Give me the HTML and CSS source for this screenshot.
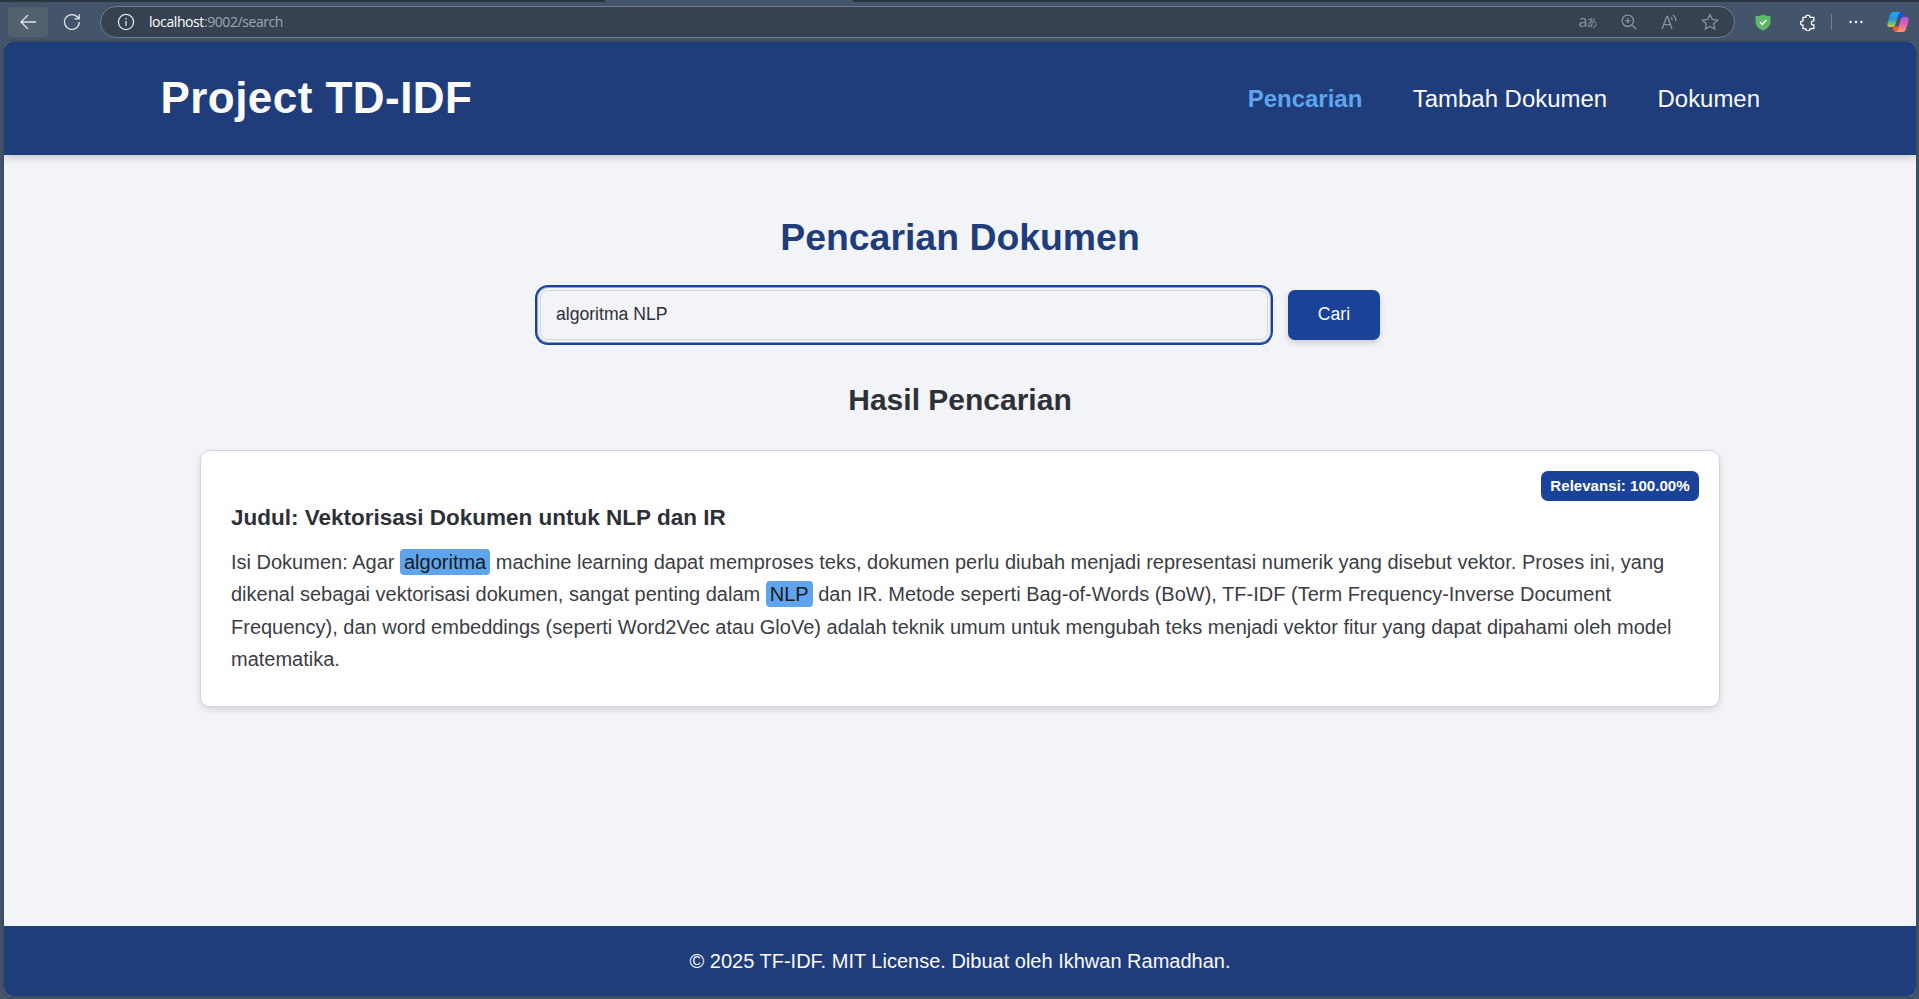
FILE: index.html
```
<!DOCTYPE html>
<html lang="id">
<head>
<meta charset="utf-8">
<title>Pencarian Dokumen</title>
<link rel="stylesheet" href="styles.css">
</head>
<body>
<div class="toolbar">
  <button class="back" aria-label="Back"><svg width="18" height="18" viewBox="0 0 18 18"><path d="M17 9H2M9 2L2 9l7 7"/></svg></button>
  <svg class="reload" width="18" height="18" viewBox="0 0 18 18"><path d="M16.300 9A7.400 7.400 0 1 1 14.800 4.500L16 5.800M16.200 1.200v4.700h-4.800"/></svg>
  <div class="address">
    <svg class="info" width="18" height="18" viewBox="0 0 18 18"><circle cx="9" cy="9" r="7.600"/><path d="M9 8v5M9 5v1.500"/></svg>
    <span class="url"><span class="host">localhost</span>:9002/search</span>
    <div class="tools">
      <span class="translate"><span class="latin">a</span><span class="kana">あ</span></span>
      <svg width="16" height="16" viewBox="0 0 16 16"><circle cx="6.800" cy="6.800" r="5.700"/><path d="M11 11l4.200 4.200M6.800 4v5.600M4 6.800h5.600"/></svg>
      <svg width="17" height="16" viewBox="0 0 17 16"><path d="M1 15L5.800 2.500h.8L11 15M2.600 10.600h6.900M9.800 3.200c1 .8 1.400 1.800 1.500 3M12 1c1.900 1.400 2.900 3.600 2.900 6"/></svg>
      <svg width="18" height="18" viewBox="0 0 18 18"><path d="M9 1.500l2.300 4.900 5.300.7-3.900 3.700 1 5.300L9 13.500l-4.700 2.600 1-5.300L1.400 7.100l5.300-.7z"/></svg>
    </div>
  </div>
  <div class="extensions">
    <svg class="shield" width="16" height="17" viewBox="0 0 16 17"><path fill="#5db867" d="M8 .5c2.200 1.200 4.600 1.600 7.500 1.600v5.400c0 4-2.800 7.200-7.500 9-4.700-1.800-7.500-5-7.500-9V2.100C3.400 2.100 5.800 1.700 8 .5z"/><path fill="none" stroke="#fff" stroke-width="1.500" d="M5 8l2.400 2.400L11.300 6"/></svg>
    <svg class="puzzle" width="16" height="17" viewBox="0 0 16 17"><path d="M3 3.300h2.700a2.200 2.200 0 0 1 4.400 0h3.700v3.600h-.4a2 2 0 0 0 0 4h.4v3.800h-3.700a2.200 2.200 0 0 1-4.400 0H3v-3.500h-.3a2.200 2.200 0 0 1 0-4.400H3z"/></svg>
    <span class="divider"></span>
    <svg class="more" width="14" height="4" viewBox="0 0 14 4"><circle cx="1.600" cy="2" r="1.200"/><circle cx="7" cy="2" r="1.200"/><circle cx="12.400" cy="2" r="1.200"/></svg>
    <svg class="copilot" width="22" height="20" viewBox="0 0 22 20">
      <defs>
        <linearGradient id="cool" x1="0" y1="0" x2="0" y2="1"><stop offset="0" stop-color="#1cacf5"/><stop offset=".45" stop-color="#2592e0"/><stop offset=".72" stop-color="#52b98a"/><stop offset="1" stop-color="#e8cf28"/></linearGradient>
        <linearGradient id="warm" x1="0" y1="0" x2="0" y2="1"><stop offset="0" stop-color="#a45af0"/><stop offset=".5" stop-color="#e85fae"/><stop offset="1" stop-color="#ff9a62"/></linearGradient>
      </defs>
      <path fill="#1c51d4" d="M10 0h3.500c1.500 0 2.200.8 2.700 2.500l.9 2.700h-5.600z"/>
      <path fill="#f05a32" d="M5.500 14.500h6L10 20H9c-1.800 0-2.600-1-3-2.500z"/>
      <path fill="url(#cool)" d="M6.500 0H14c-1.600.4-2.200 1.500-2.700 3.200L8.500 12.300C8 14.100 6.800 15 5 15H2.700C.6 15 0 13.500.5 11.500L3 3C3.600 1 4.600 0 6.500 0z"/>
      <path fill="url(#warm)" d="M15.500 20H8.500c1.500-.4 2-1.500 2.500-3.200l2.600-9.100C14.100 5.900 15.200 5 17 5h2.300c2.100 0 2.700 1.500 2.200 3.500L19 17c-.6 2-1.600 3-3.500 3z"/>
    </svg>
  </div>
</div>
<div class="page">
  <header class="header">
    <div class="bar">
      <h1 class="brand">Project TD-IDF</h1>
      <nav class="nav"><a class="active">Pencarian</a><a>Tambah Dokumen</a><a>Dokumen</a></nav>
    </div>
  </header>
  <main class="main">
    <h2 class="title">Pencarian Dokumen</h2>
    <form class="search">
      <input class="query" type="text" value="algoritma NLP">
      <button class="submit" type="button">Cari</button>
    </form>
    <h3 class="subtitle">Hasil Pencarian</h3>
    <article class="card">
      <span class="badge">Relevansi: 100.00%</span>
      <h4 class="doc-title">Judul: Vektorisasi Dokumen untuk NLP dan IR</h4>
      <p class="doc-body">Isi Dokumen: Agar <mark>algoritma</mark> machine learning dapat memproses teks, dokumen perlu diubah menjadi representasi numerik yang disebut vektor. Proses ini, yang dikenal sebagai vektorisasi dokumen, sangat penting dalam <mark>NLP</mark> dan IR. Metode seperti Bag-of-Words (BoW), TF-IDF (Term Frequency-Inverse Document Frequency), dan word embeddings (seperti Word2Vec atau GloVe) adalah teknik umum untuk mengubah teks menjadi vektor fitur yang dapat dipahami oleh model matematika.</p>
    </article>
  </main>
  <footer class="footer">© 2025 TF-IDF. MIT License. Dibuat oleh Ikhwan Ramadhan.</footer>
</div>
</body>
</html>
```
FILE: styles.css
```
* { box-sizing: border-box; }
html, body { height: 100%; }
body {
  margin: 0;
  display: flex;
  flex-direction: column;
  background: #44546a;
  font-family: Arial, "Liberation Sans", sans-serif;
  overflow: hidden;
}
svg { flex: none; fill: none; stroke: #dfe3e8; stroke-width: 1.3; }

/* Browser toolbar */
.toolbar {
  height: 42px;
  flex: none;
  display: flex;
  align-items: center;
  padding: 2px 10px 0 8px;
  background:
    linear-gradient(#293540, #293540) 0 0 / 605px 2px no-repeat,
    linear-gradient(#293540, #293540) 853px 0 / 1066px 2px no-repeat,
    #44546a;
}
.back {
  width: 40px; height: 30px;
  padding: 0;
  border: 0;
  border-radius: 4px;
  background: #526070;
  display: flex; align-items: center; justify-content: center;
}
.reload { margin-left: 15px; }
.address {
  width: 1635px; height: 32px;
  margin-left: 19px;
  padding: 0 15px 0 16px;
  display: flex; align-items: center;
  border: 1px solid #717c89;
  border-radius: 16px;
  background: #364252;
}
.url {
  margin-left: 14px;
  padding-bottom: 1px;
  font: 14px "Open Sans", sans-serif;
  letter-spacing: -0.42px;
  color: #a0a6ae;
}
.host { color: #fff; }
.tools { margin-left: auto; display: flex; align-items: center; gap: 23.5px; }
.tools svg { stroke: #8b929b; }
.translate { color: #8b929b; display: flex; align-items: baseline; font: 16px "Open Sans", sans-serif; line-height: 16px; padding-bottom: 2px; }
.kana { font: 11px "Noto Sans CJK JP", sans-serif; line-height: 16px; margin-left: -1px; }
.extensions { flex: 1; display: flex; align-items: center; margin-left: 20px; }
.shield { stroke: none; }
.puzzle { margin-left: 29px; stroke: #fff; }
.divider { width: 1px; height: 16px; margin-left: 15px; background: #738090; }
.more { margin-left: 17px; fill: #fff; stroke: none; }
.copilot { margin-left: auto; stroke: none; }

/* Page */
.page {
  flex: 1;
  margin: 0 3px 3px 4px;
  display: flex;
  flex-direction: column;
  border-radius: 8px;
  overflow: hidden;
  background: #f2f4f8;
  box-shadow: 0 0 3px #2c3846;
}
.header {
  height: 113px;
  flex: none;
  background: #1f3d7a;
  box-shadow: 0 2px 8px rgba(0, 0, 0, .22);
}
.bar {
  width: 1600px; height: 100%;
  margin: 0 auto;
  display: flex; align-items: center; justify-content: space-between;
}
.brand { margin: 0; padding: 0 0 2px .5px; font-size: 44px; letter-spacing: .45px; color: #fafafa; }
.nav { display: flex; gap: 50.5px; font-size: 23.95px; color: #fafafa; }
.active { font-weight: bold; color: #5ea5ed; }
.main { flex: 1; display: flex; flex-direction: column; align-items: center; padding-top: 60px; }
.title { margin: 0; font-size: 37.4px; line-height: 44px; color: #1f3d7a; }
.search { display: flex; gap: 20px; margin-top: 31px; }
.query {
  width: 728px; height: 50px;
  padding: 0 15px 2px;
  border: 1px solid #d3d6e1;
  border-radius: 8px;
  outline: 0;
  background: #f2f4f8;
  box-shadow: 0 0 0 2px #f2f4f8, 0 0 0 3px #8da2cc, 0 0 0 5px #1a4298;
  font: 17.6px Arial, "Liberation Sans", sans-serif;
  color: #2e3038;
}
.submit {
  width: 92px; height: 50px;
  padding: 0 0 2px;
  border: 0;
  border-radius: 7px;
  background: #1a4298;
  box-shadow: 0 3px 6px rgba(0, 0, 0, .16);
  font: 17.6px Arial, "Liberation Sans", sans-serif;
  color: #fafafa;
}
.subtitle { margin: 42px 0 0; font-size: 30px; line-height: 36px; color: #2e3038; }
.card {
  position: relative;
  width: 1520px; height: 257px;
  margin-top: 32px;
  padding: 51px 30px 0;
  border: 1px solid #d3d6e1;
  border-radius: 10px;
  background: #fff;
  box-shadow: 0 3px 7px rgba(0, 0, 0, .12);
}
.badge {
  position: absolute;
  top: 20px; right: 20px;
  width: 158px; height: 30px;
  border-radius: 7px;
  background: #1a4298;
  font-size: 15.1px; font-weight: bold; line-height: 30px;
  text-align: center;
  color: #fff;
}
.doc-title { margin: 0; font-size: 22.5px; line-height: 32px; color: #2e3038; }
.doc-body { margin: 12px 0 0; font-size: 20px; line-height: 32.4px; color: #3b3d44; }
mark { padding: 2px 4px; border-radius: 4px; background: #5ea5ed; color: #1a1a1a; }
.footer {
  height: 70px;
  flex: none;
  background: #1f3d7a;
  color: #fafafa;
  font-size: 20px; line-height: 70px;
  text-align: center;
}
```
